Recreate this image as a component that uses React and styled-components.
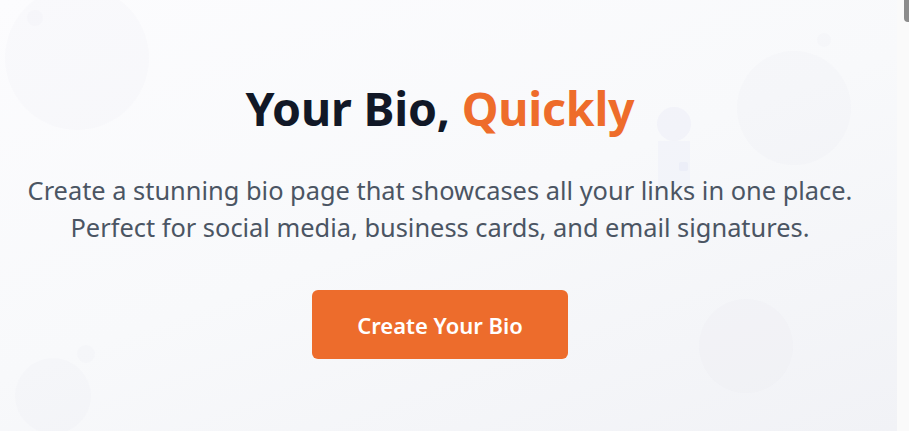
import React from 'react';
import styled, { createGlobalStyle } from 'styled-components';

const GlobalStyle = createGlobalStyle`
  html, body {
    margin: 0;
    padding: 0;
  }
  body {
    font-family: "Noto Sans", "Open Sans", Arial, sans-serif;
    background: #fafbfc;
  }
`;

const Page = styled.div`
  display: flex;
  height: 431px;
  overflow: hidden;
`;

const Hero = styled.section`
  position: relative;
  flex: 1;
  overflow: hidden;
  box-sizing: border-box;
  padding: 80px 17px 0 0;
  display: flex;
  flex-direction: column;
  align-items: center;
  background: linear-gradient(160deg, #fcfcfe 0%, #f8f9fb 50%, #f1f2f6 100%);
`;

const Track = styled.div`
  width: 12px;
  background: #fafafa;
  display: flex;
  justify-content: flex-end;
  align-items: flex-start;
`;

const Thumb = styled.div`
  width: 5px;
  height: 22px;
  background: #8c8c8c;
  border-radius: 0 0 0 4px;
`;

const Decor = styled.svg`
  position: absolute;
  inset: 0;
  width: 100%;
  height: 100%;
  pointer-events: none;
`;

const Content = styled.div`
  position: relative;
  z-index: 1;
  display: flex;
  flex-direction: column;
  align-items: center;
  text-align: center;
`;

const Title = styled.h1`
  margin: 0;
  font-size: 46.5px;
  line-height: 56px;
  font-weight: 700;
  color: #111827;
  letter-spacing: -0.2px;
`;

const Accent = styled.span`
  color: #ee6c2b;
`;

const Lead = styled.p`
  margin: 36px 0 0;
  font-size: 25.4px;
  line-height: 37px;
  color: #4b5563;
  max-width: 880px;
`;

const Button = styled.button`
  margin-top: 44px;
  width: 256px;
  height: 69px;
  border: none;
  border-radius: 6px;
  background: #ed6c2c;
  color: #ffffff;
  font-family: inherit;
  font-size: 22px;
  font-weight: 600;
  cursor: pointer;
`;

const blobs = [
  { cx: 77, cy: 58, r: 72 },
  { cx: 35, cy: 18, r: 8 },
  { cx: 794, cy: 108, r: 57 },
  { cx: 824, cy: 40, r: 7 },
  { cx: 746, cy: 346, r: 47 },
  { cx: 53, cy: 396, r: 38 },
  { cx: 86, cy: 354, r: 9 },
];

export default function App() {
  return (
    <>
      <GlobalStyle />
      <Page>
        <Hero>
          <Decor viewBox="0 0 897 431" preserveAspectRatio="xMinYMin slice">
            {blobs.map((b, i) => (
              <circle key={i} cx={b.cx} cy={b.cy} r={b.r} fill="#dfe2ee" fillOpacity="0.09" />
            ))}
            <circle cx="674" cy="124" r="17" fill="#e4e6f6" fillOpacity="0.3" />
            <rect x="658" y="141" width="32" height="46" fill="#e4e6f6" fillOpacity="0.25" />
            <rect x="679" y="162" width="9" height="9" rx="2" fill="#dfe2f6" fillOpacity="0.3" />
          </Decor>
          <Content>
            <Title>
              Your Bio, <Accent>Quickly</Accent>
            </Title>
            <Lead>
              Create a stunning bio page that showcases all your links in one place.
              Perfect for social media, business cards, and email signatures.
            </Lead>
            <Button>Create Your Bio</Button>
          </Content>
        </Hero>
        <Track>
          <Thumb />
        </Track>
      </Page>
    </>
  );
}
